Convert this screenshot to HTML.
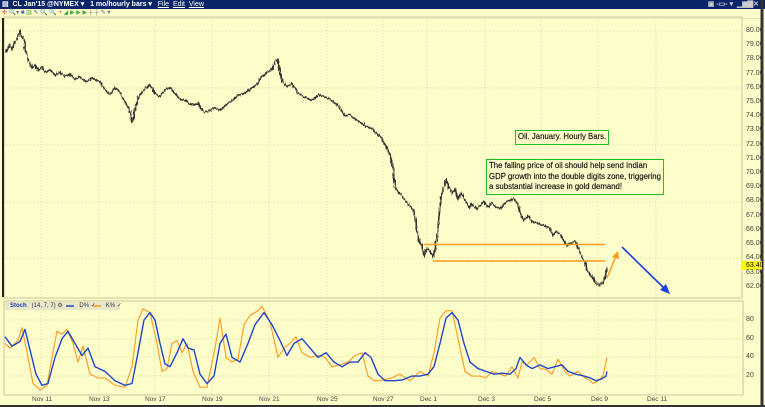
<!DOCTYPE html>
<html><head><meta charset="utf-8"><style>
*{margin:0;padding:0}
body{width:765px;height:407px;overflow:hidden;background:#fdfdc9;font-family:"Liberation Sans",sans-serif;position:relative}
.tb{position:absolute;left:0;top:0;width:765px;height:9px;background:#0a246a;color:#fff;font-size:7px;line-height:9px;white-space:nowrap;font-weight:bold}
.tool{position:absolute;left:0;top:9px;width:765px;height:9px;background:#fdfdc9;border-bottom:1px solid #e8e8b8}
.box{position:absolute;border:1.5px solid #22c022;background:#fdfdc9;font-size:7.8px;line-height:10.5px;color:#111;padding:1px 2px;white-space:nowrap;-webkit-text-stroke:0.15px #111}
.pl{position:absolute;left:746px;font-size:7px;color:#444}
.xl{position:absolute;top:396px;font-size:6.5px;color:#444}
</style></head><body>
<div class="tb">&nbsp;▤&nbsp; CL Jan'15 @NYMEX ▾ &nbsp; 1 mo/hourly bars ▾ &nbsp; <u style="font-weight:normal">File</u> &nbsp;<u style="font-weight:normal">Edit</u> &nbsp;<u style="font-weight:normal">View</u><span style="position:absolute;right:6px;color:#ccc">▣ ‑▭‑ ▾ &nbsp;▁▆▇✕</span></div>
<div class="tool"><span style="font-size:6px;color:#c44;position:absolute;left:2px;top:0">✣ <span style="color:#668">🔍▾ <span style="color:#36c">■</span> <span style="color:#4a4">▥</span> ✎ 🔍 🔍 <span style="color:#c44">+</span> <span style="color:#4a4">◢ ▶ ▶ ▶</span> ┼ ┼ ✎ ▾</span></span></div>
<svg width="765" height="407" style="position:absolute;left:0;top:0">
<defs>
<filter id="j" x="-5%" y="-10%" width="110%" height="120%">
<feTurbulence type="fractalNoise" baseFrequency="0.9 0.15" numOctaves="2" seed="3" result="n"/>
<feDisplacementMap in="SourceGraphic" in2="n" scale="4" xChannelSelector="R" yChannelSelector="G"/>
</filter>
</defs>
<g stroke="#e2e2b0" stroke-dasharray="1,2" stroke-width="1">
<line x1="41" y1="18" x2="41" y2="395"/><line x1="99" y1="18" x2="99" y2="395"/><line x1="155" y1="18" x2="155" y2="395"/><line x1="212" y1="18" x2="212" y2="395"/><line x1="269" y1="18" x2="269" y2="395"/><line x1="327" y1="18" x2="327" y2="395"/><line x1="383" y1="18" x2="383" y2="395"/><line x1="427" y1="18" x2="427" y2="395"/><line x1="485" y1="18" x2="485" y2="395"/><line x1="541" y1="18" x2="541" y2="395"/><line x1="598" y1="18" x2="598" y2="395"/><line x1="656" y1="18" x2="656" y2="395"/>
<line x1="4" y1="31" x2="742" y2="31"/><line x1="4" y1="88" x2="742" y2="88"/><line x1="4" y1="145" x2="742" y2="145"/><line x1="4" y1="202" x2="742" y2="202"/><line x1="4" y1="258" x2="742" y2="258"/>
<line x1="4" y1="320" x2="742" y2="320"/><line x1="4" y1="339" x2="742" y2="339"/><line x1="4" y1="357" x2="742" y2="357"/><line x1="4" y1="376" x2="742" y2="376"/>
</g>
<rect x="4" y="17" width="738" height="281" fill="none" stroke="#c8c8a0"/>
<rect x="4" y="301" width="739" height="94" fill="none" stroke="#c8c8a0"/>
<line x1="3" y1="18" x2="3" y2="297" stroke="#222" stroke-width="2"/>
<line x1="762" y1="0" x2="762" y2="407" stroke="#333" stroke-width="3"/>
<line x1="0" y1="406" x2="765" y2="406" stroke="#333" stroke-width="2"/>
<g filter="url(#j)">
<g transform="matrix(1,0,0,-14.22,0,1168.6)">
<polyline vector-effect="non-scaling-stroke" fill="none" stroke="#333" stroke-width="1.7" points="6,78.5 8,78.8 10,79 12,78.7 14,79.1 16,79.3 18,79.6 20,80 22,79.6 24,79.4 26,78.6 27,78.2 30,77.7 32,77.4 35,77.6 38,77.2 42,77.5 46,77.1 50,77.3 55,76.9 60,77.1 65,76.8 70,77 75,76.6 80,76.8 86,76.4 92,76.7 100,76.4 105,75.9 110,75.5 115,76 120,75.7 125,75 130,74.4 132,73.5 134,74.2 138,75.3 142,75.7 146,76 150,76.2 155,75.6 160,75.4 165,75.9 170,76 175,75.6 180,75.2 186,75.1 192,74.8 198,74.9 204,74.3 210,74.4 215,74.6 220,74.4 226,74.8 232,75.1 238,75.5 244,75.6 250,75.9 256,76.2 262,76.8 267,77.1 272,77.3 276,77.9 278,78 280,77 283,76.4 287,76.1 292,76.3 297,75.7 302,75.4 307,75.3 312,75.1 318,75.5 324,75.4 330,75.2 336,74.9 341,74.5 345,74 350,74.1 355,73.8 360,73.6 366,73.3 372,73.1 378,72.7 382,72.4 386,71.9 390,71.3 393,70.4 395,69 398,68.7 402,68.4 406,68 410,67.7 414,67.3 417,66 419,65.2 422,64.9 424,64.2 427,64.7 430,64.5 433,64.1 435,64.7 437,65.5 439,67 441,68.2 443,68.8 446,69.5 449,69 452,68.6 455,68.9 458,68.2 461,68.6 465,68.1 469,67.6 472,67.8 476,67.5 480,67.7 484,68 488,67.6 492,67.9 496,67.6 500,67.5 505,67.9 510,68.1 514,68.2 518,67.8 521,67.1 524,66.7 528,67 532,66.6 536,66.5 540,66.4 545,66.3 550,66.1 553,65.6 556,65.9 560,65.7 564,65.2 567,64.9 571,65.1 575,65.2 579,64.6 582,64.1 585,63.7 588,63.1 591,62.8 594,62.5 597,62.2 600,62.1 603,62.3 605,62.7 607,63.4"/>
</g>
</g>
<line x1="424" y1="244.5" x2="605" y2="244.5" stroke="#ff9920" stroke-width="1.5"/>
<line x1="433" y1="261" x2="605" y2="261" stroke="#ff9920" stroke-width="1.5"/>
<line x1="607" y1="278" x2="616" y2="256" stroke="#ff9920" stroke-width="1.5"/>
<polygon points="618,251 612,257 619,259" fill="#ff9920"/>
<line x1="622" y1="247" x2="665" y2="289" stroke="#1a3ee8" stroke-width="1.6"/>
<polygon points="670,294 660,290 666,284" fill="#1a3ee8"/>
<g transform="matrix(1,0,0,-0.933,0,394.7)">
<polyline vector-effect="non-scaling-stroke" fill="none" stroke="#ff9920" stroke-width="1.1" stroke-linejoin="round" points="5,55 10,50 18,58 22,72 28,40 33,12 40,5 47,10 52,40 57,68 62,65 67,70 73,55 78,35 83,52 90,22 98,18 105,18 115,10 125,8 132,30 138,80 143,92 150,88 157,55 162,25 167,28 172,55 177,58 182,45 187,55 193,25 200,8 207,8 215,50 220,82 226,40 232,35 238,38 244,75 250,85 258,90 262,95 270,78 278,40 284,50 290,55 296,62 302,45 310,40 318,42 325,40 332,30 340,32 348,35 355,42 362,45 368,20 374,15 380,15 392,18 400,22 410,15 420,25 428,20 434,45 440,82 446,90 452,90 458,60 465,25 472,20 480,20 486,18 492,25 500,22 506,20 512,30 518,18 522,35 527,32 534,40 540,28 546,27 552,22 558,38 565,25 570,20 578,25 585,18 590,15 593,12 597,14 603,20 607,40"/>
<polyline vector-effect="non-scaling-stroke" fill="none" stroke="#2244cc" stroke-width="1.4" stroke-linejoin="round" points="5,62 12,52 20,57 25,70 30,48 36,22 42,10 48,12 55,40 62,60 68,68 75,55 82,42 88,50 95,30 105,25 115,15 125,10 132,12 138,45 144,80 150,88 155,80 160,55 165,33 170,30 177,45 183,60 188,50 194,48 200,22 207,12 214,20 220,55 226,65 232,40 240,35 248,55 255,75 264,88 272,75 280,58 287,42 294,55 302,60 310,50 318,40 326,45 334,35 342,30 350,35 358,35 365,45 371,40 378,22 385,15 395,15 403,16 412,20 420,20 428,22 434,30 440,55 446,82 452,88 458,80 464,55 470,35 478,28 486,25 494,22 502,23 510,22 516,28 520,40 526,32 532,28 540,32 548,28 555,30 562,32 568,25 576,22 584,20 590,18 596,15 602,17 606,20 607,25"/>
</g>
<rect x="5" y="302" width="115" height="8" fill="#e8e8c8"/>
<line x1="66" y1="306" x2="74" y2="306" stroke="#2244cc" stroke-width="1.5"/>
<line x1="93" y1="306" x2="101" y2="306" stroke="#ff9920" stroke-width="1.5"/>
<rect x="741" y="261" width="21" height="9" fill="#ffff00"/>
</svg>
<div style="position:absolute;left:10px;top:302px;font-size:6px;color:#335;white-space:nowrap"><b style="color:#2244aa">Stoch</b> &nbsp;&nbsp;(14, 7, 7) ⚙ &nbsp;&nbsp;&nbsp;&nbsp;&nbsp;&nbsp;&nbsp;&nbsp; D% ✓ &nbsp;&nbsp;&nbsp;&nbsp;&nbsp;K% ✓</div>
<div class="box" style="left:515px;top:130px">Oil. January. Hourly Bars.</div>
<div class="box" style="left:486px;top:159px">The falling price of oil should help send Indian<br>GDP growth into the double digits zone, triggering<br>a substantial increase in gold demand!</div>
<div class="pl" style="top:27px">80.00</div><div class="pl" style="top:41px">79.00</div><div class="pl" style="top:55px">78.00</div><div class="pl" style="top:70px">77.00</div><div class="pl" style="top:84px">76.00</div><div class="pl" style="top:98px">75.00</div><div class="pl" style="top:112px">74.00</div><div class="pl" style="top:126px">73.00</div><div class="pl" style="top:141px">72.00</div><div class="pl" style="top:155px">71.00</div><div class="pl" style="top:169px">70.00</div><div class="pl" style="top:183px">69.00</div><div class="pl" style="top:197px">68.00</div><div class="pl" style="top:212px">67.00</div><div class="pl" style="top:226px">66.00</div><div class="pl" style="top:240px">65.00</div><div class="pl" style="top:254px">64.00</div><div class="pl" style="top:262px;color:#000">63.40</div><div class="pl" style="top:269px">63.00</div><div class="pl" style="top:283px">62.00</div>
<div class="pl" style="top:316px">80</div><div class="pl" style="top:335px">60</div><div class="pl" style="top:353px">40</div><div class="pl" style="top:372px">20</div>
<div class="xl" style="left:32px">Nov 11</div><div class="xl" style="left:89px">Nov 13</div><div class="xl" style="left:145px">Nov 17</div><div class="xl" style="left:202px">Nov 19</div><div class="xl" style="left:259px">Nov 21</div><div class="xl" style="left:317px">Nov 25</div><div class="xl" style="left:373px">Nov 27</div><div class="xl" style="left:420px">Dec 1</div><div class="xl" style="left:478px">Dec 3</div><div class="xl" style="left:534px">Dec 5</div><div class="xl" style="left:591px">Dec 9</div><div class="xl" style="left:647px">Dec 11</div>
</body></html>
